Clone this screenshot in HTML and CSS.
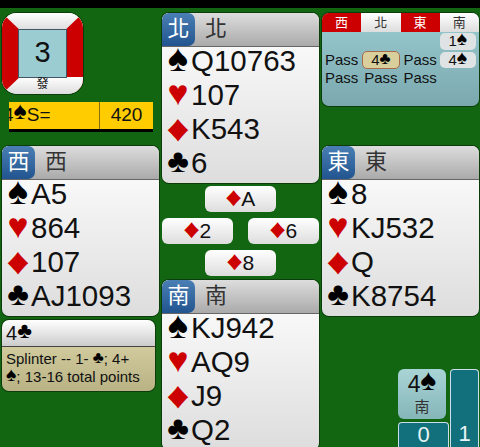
FILE: index.html
```html
<!DOCTYPE html>
<html lang="zh-Hant">
<head>
    <meta charset="UTF-8">
    <meta name="viewport" content="width=device-width, initial-scale=1.0">
    <title>Bridge</title>
    <link rel="stylesheet" href="styles.css">
</head>
<body>
    <div class="topbar"></div>
    <div class="table">
        <div class="col col-left">
            <div class="board">
                <div class="board-edge edge-top"></div>
                <div class="board-edge edge-right"></div>
                <div class="board-edge edge-bottom"></div>
                <div class="board-edge edge-left"></div>
                <div class="board-number">3</div>
                <div class="dealer">發</div>
            </div>
            <div class="score">
                <div class="score-contract">4<span class="suit spade">♠</span>S=</div>
                <div class="score-points">420</div>
            </div>
            <div class="hand">
                <div class="hand-header"><span class="seat">西</span><span class="seat-name">西</span></div>
                <div class="hand-body">
                    <div class="hand-row"><span class="suit spade">♠</span>A5</div>
                    <div class="hand-row"><span class="suit heart">♥</span>864</div>
                    <div class="hand-row"><span class="suit diamond">♦</span>107</div>
                    <div class="hand-row"><span class="suit club">♣</span>AJ1093</div>
                </div>
            </div>
            <div class="explain">
                <div class="explain-bid">4<span class="suit club">♣</span></div>
                <div class="explain-text">Splinter -- 1- <span class="suit club">♣</span>; 4+ <span class="nobreak"><span class="suit spade">♠</span>;</span> 13-16 total points</div>
            </div>
        </div>

        <div class="col col-center">
            <div class="hand">
                <div class="hand-header"><span class="seat">北</span><span class="seat-name">北</span></div>
                <div class="hand-body">
                    <div class="hand-row"><span class="suit spade">♠</span>Q10763</div>
                    <div class="hand-row"><span class="suit heart">♥</span>107</div>
                    <div class="hand-row"><span class="suit diamond">♦</span>K543</div>
                    <div class="hand-row"><span class="suit club">♣</span>6</div>
                </div>
            </div>
            <div class="trick">
                <div class="trick-row"><div class="played"><span class="suit diamond">♦</span>A</div></div>
                <div class="trick-row trick-middle">
                    <div class="played"><span class="suit diamond">♦</span>2</div>
                    <div class="played"><span class="suit diamond">♦</span>6</div>
                </div>
                <div class="trick-row"><div class="played"><span class="suit diamond">♦</span>8</div></div>
            </div>
            <div class="hand">
                <div class="hand-header"><span class="seat">南</span><span class="seat-name">南</span></div>
                <div class="hand-body">
                    <div class="hand-row"><span class="suit spade">♠</span>KJ942</div>
                    <div class="hand-row"><span class="suit heart">♥</span>AQ9</div>
                    <div class="hand-row"><span class="suit diamond">♦</span>J9</div>
                    <div class="hand-row"><span class="suit club">♣</span>Q2</div>
                </div>
            </div>
        </div>

        <div class="col col-right">
            <div class="auction">
                <div class="auction-head">
                    <div class="dir vul">西</div>
                    <div class="dir">北</div>
                    <div class="dir vul">東</div>
                    <div class="dir">南</div>
                </div>
                <div class="auction-grid">
                    <div></div><div></div><div></div><div class="bid">1<span class="suit spade">♠</span></div>
                    <div class="call">Pass</div><div class="bid bid-alert">4<span class="suit club">♣</span></div><div class="call">Pass</div><div class="bid">4<span class="suit spade">♠</span></div>
                    <div class="call">Pass</div><div class="call">Pass</div><div class="call">Pass</div><div></div>
                </div>
            </div>
            <div class="hand">
                <div class="hand-header"><span class="seat">東</span><span class="seat-name">東</span></div>
                <div class="hand-body">
                    <div class="hand-row"><span class="suit spade">♠</span>8</div>
                    <div class="hand-row"><span class="suit heart">♥</span>KJ532</div>
                    <div class="hand-row"><span class="suit diamond">♦</span>Q</div>
                    <div class="hand-row"><span class="suit club">♣</span>K8754</div>
                </div>
            </div>
            <div class="corner">
                <div class="corner-left">
                    <div class="final">
                        <div class="final-bid">4<span class="suit spade">♠</span></div>
                        <div class="final-seat">南</div>
                    </div>
                    <div class="tricks-box">0</div>
                </div>
                <div class="tricks-box tricks-tall">1</div>
            </div>
        </div>
    </div>
</body>
</html>
```

FILE: styles.css
```css
html, body {
    margin: 0;
    padding: 0;
    height: 447px;
    overflow: hidden;
}
body {
    background: #126612;
    color: #111;
    font-family: "Liberation Sans", "Noto Sans CJK TC", sans-serif;
}
.topbar {
    height: 8px;
    background: #000;
}
.table {
    display: flex;
    padding: 5px 2px 0 2px;
    gap: 3px;
}
.col {
    width: 157px;
    flex: none;
}

/* suit glyphs come out at different sizes, so each one is scaled on its own */
.suit {
    display: inline-block;
    color: #000;
    line-height: 0;
    text-indent: 0;
    transform: translateY(-0.07em);
}
.spade {
    font-size: 1.3em;
}
.heart {
    font-size: 1.2em;
    color: #cc0000;
}
.diamond {
    font-size: 1.25em;
    color: #cc0000;
    transform: scaleX(1.25);
    margin: 0 0.04em;
}
.club {
    font-size: 1.12em;
}
.nobreak {
    white-space: nowrap;
}

/* board number */
.board {
    position: relative;
    width: 81px;
    height: 81px;
    border-radius: 15px;
    overflow: hidden;
    box-shadow: 0 0 0 1px #0c3c0c;
    background: linear-gradient(#fff, #ddd);
}
.board-edge {
    position: absolute;
}
.edge-left, .edge-right {
    top: 0;
    bottom: 0;
    width: 17px;
    background: #cc0000;
}
.edge-left {
    left: 0;
    clip-path: polygon(0 0, 100% 20%, 100% 80%, 0 100%);
}
.edge-right {
    right: 0;
    clip-path: polygon(100% 0, 0 20%, 0 80%, 100% 100%);
}
.edge-top, .edge-bottom {
    left: 0;
    right: 0;
    height: 17px;
}
.edge-top {
    top: 0;
    background: linear-gradient(#fff, #ddd);
}
.edge-bottom {
    bottom: 0;
    background: linear-gradient(#fff, #ddd);
}
.board-number {
    position: absolute;
    left: 16px;
    top: 16px;
    width: 49px;
    height: 49px;
    background: #9accd2;
    border: 1px solid #456;
    box-sizing: border-box;
    text-align: center;
    font-size: 29px;
    line-height: 45px;
}
.dealer {
    position: absolute;
    left: 0;
    right: 0;
    bottom: 3px;
    text-align: center;
    font-size: 12px;
    line-height: 14px;
}

/* score bar */
.score {
    display: flex;
    width: 144px;
    height: 27px;
    margin: 8px 0 17px 7px;
    background: #ffcc00;
    box-shadow: 0 3px 0 #000;
    font-size: 19px;
    line-height: 25px;
}
.score-contract {
    width: 90px;
    border-right: 1px solid #8a6d10;
    white-space: nowrap;
    overflow: hidden;
    text-indent: -6px;
}
.score-points {
    flex: 1;
    text-align: center;
}

/* hands */
.hand {
    width: 157px;
    border-radius: 7px;
    overflow: hidden;
    box-shadow: 0 0 0 1px #0c3c0c;
    background: linear-gradient(#fff, #ddd);
}
.hand-header {
    display: flex;
    height: 34px;
    background: linear-gradient(#ddd, #aaa);
    border-bottom: 1px solid #666;
    box-sizing: border-box;
    font-size: 22px;
    line-height: 32px;
}
.seat {
    width: 33px;
    text-align: center;
    color: #fff;
    background: linear-gradient(#4a7fb5, #22558f);
    border-radius: 0 7px 7px 0;
}
.seat-name {
    margin-left: 10px;
    color: #333;
}
.hand-body {
    margin-top: -3px;
    padding: 0 0 3px 3px;
}
.hand-row {
    display: flex;
    align-items: center;
    height: 34px;
    line-height: 34px;
    font-size: 29.5px;
    white-space: nowrap;
}
.hand-row .suit {
    width: 26px;
    text-align: center;
    line-height: 34px;
    margin: 0;
}

/* current trick */
.trick {
    display: flex;
    flex-direction: column;
    gap: 6px;
    padding: 3px 0 4px;
    align-items: center;
}
.trick-row {
    display: flex;
    justify-content: center;
}
.trick-middle {
    width: 100%;
    justify-content: space-between;
}
.played {
    width: 71px;
    height: 26px;
    border-radius: 6px;
    background: linear-gradient(#fff, #ddd);
    text-align: center;
    font-size: 21px;
    line-height: 26px;
}

/* auction */
.auction {
    height: 93px;
    margin-bottom: 40px;
    border-radius: 7px;
    overflow: hidden;
    box-shadow: 0 0 0 1px #0c3c0c;
    background: linear-gradient(#9accd2, #7aa8ae);
}
.auction-head {
    display: grid;
    grid-template-columns: repeat(4, 1fr);
    height: 19px;
}
.dir {
    text-align: center;
    font-size: 13px;
    line-height: 19px;
    color: #333;
    background: linear-gradient(#fff, #ddd);
}
.dir.vul {
    color: #fff;
    background: #cc0000;
}
.auction-grid {
    display: grid;
    grid-template-columns: repeat(4, 1fr);
    grid-auto-rows: 18.5px;
    font-size: 15px;
    line-height: 18px;
    text-align: center;
}
.bid {
    margin: 1px 3px 1px 0;
    border-radius: 5px;
    background: #dfe3e3;
    line-height: 16px;
}
.bid-alert {
    margin: 0 1px;
    background: #d8cf9c;
    border: 1px solid #a86a4a;
}

/* bid explanation */
.explain {
    width: 153px;
    height: 71px;
    margin-top: 4px;
    border-radius: 7px;
    overflow: hidden;
    box-shadow: 0 0 0 1px #0c3c0c;
}
.explain-bid {
    height: 27px;
    box-sizing: border-box;
    background: linear-gradient(#fff, #ccc);
    border-bottom: 1px solid #444;
    font-size: 20px;
    line-height: 26px;
    padding-left: 4px;
}
.explain-text {
    height: 44px;
    box-sizing: border-box;
    padding: 3px 10px 2px 4px;
    background: linear-gradient(#d0ca9c, #b8b284);
    font-size: 15px;
    line-height: 18px;
}

/* bottom corner */
.corner {
    display: flex;
    justify-content: flex-end;
    gap: 1px;
    margin-top: 53px;
}
.final {
    width: 48px;
    height: 50px;
    border-radius: 6px;
    background: linear-gradient(#a9d4d6, #85b6b8);
    text-align: center;
}
.final-bid {
    font-size: 23px;
    line-height: 30px;
}
.final-seat {
    font-size: 15px;
    line-height: 16px;
    color: #333;
}
.tricks-box {
    width: 51px;
    height: 30px;
    margin-top: 3px;
    background: #126f7c;
    border: 1px solid #cde;
    border-bottom: 0;
    border-radius: 4px 4px 0 0;
    box-sizing: border-box;
    color: #e8f4f4;
    text-align: center;
    font-size: 22px;
    line-height: 24px;
}
.tricks-tall {
    width: 29px;
    height: 78px;
    margin-top: 0;
    padding-top: 52px;
}
```
